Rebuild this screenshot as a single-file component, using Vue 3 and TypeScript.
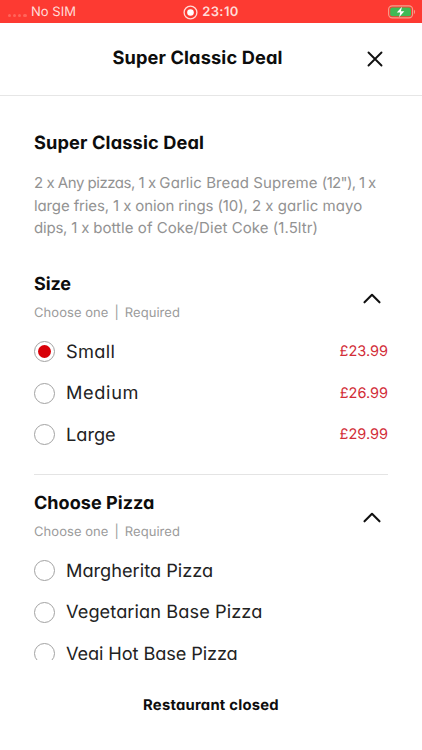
<script setup lang="ts">
import { ref } from 'vue'

interface Run {
  text: string
  tracking: number
}

interface Option {
  name: string
  tracking: number
  price?: string
}

interface Group {
  title: string
  tracking: number
  options: Option[]
}

const description: Run[][] = [
  [
    { text: '2 x Any pizzas, 1 x ', tracking: -0.48 },
    { text: 'Garlic Bread Supreme ', tracking: 0.08 },
    { text: '(12"), 1 x', tracking: -0.65 },
  ],
  [
    { text: 'large fries, 1 x ', tracking: -0.12 },
    { text: 'onion rings (10), ', tracking: -0.1 },
    { text: '2 x garlic mayo', tracking: 0.05 },
  ],
  [
    { text: 'dips, 1 x ', tracking: -0.2 },
    { text: 'bottle of Coke/Diet Coke (1.5ltr)', tracking: 0.06 },
  ],
]

const groups: Group[] = [
  {
    title: 'Size',
    tracking: -0.1,
    options: [
      { name: 'Small', tracking: 0.35, price: '£23.99' },
      { name: 'Medium', tracking: 0.65, price: '£26.99' },
      { name: 'Large', tracking: 0, price: '£29.99' },
    ],
  },
  {
    title: 'Choose Pizza',
    tracking: 0.05,
    options: [
      { name: 'Margherita Pizza', tracking: 0 },
      { name: 'Vegetarian Base Pizza', tracking: 0.08 },
      { name: 'Vegi Hot Base Pizza', tracking: -0.11 },
    ],
  },
]

const selected = ref<Record<string, string>>({ Size: 'Small' })
</script>

<template>
  <div class="screen">
    <div class="status">
      <div class="carrier">
        <span class="dots"><i v-for="n in 4" :key="n"></i></span>
        <span>No SIM</span>
      </div>
      <div class="clock">
        <svg width="15" height="15" viewBox="0 0 15 15">
          <circle cx="7.5" cy="7.5" r="6.4" fill="none" stroke="#ffdcd8" stroke-width="1.3" />
          <circle cx="7.5" cy="7.5" r="3.3" fill="#fff" />
        </svg>
        <span>23:10</span>
      </div>
      <svg class="battery" width="28" height="14" viewBox="0 0 28 14">
        <rect x="0.6" y="0.9" width="24" height="12" rx="3.6" fill="none" stroke="#f5a08c" stroke-width="1.1" />
        <rect x="2.2" y="2.5" width="20.8" height="8.8" rx="2" fill="#3fba55" />
        <path d="M26 4.8c1.4.6 1.4 3.6 0 4.2z" fill="#f5a08c" />
        <path d="M14 1.8 8.8 7.5h3.4l-1.1 4.7 5.2-6h-3.4z" fill="#fff" />
      </svg>
    </div>

    <header class="header">
      <h1>Super Classic Deal</h1>
      <svg class="close" width="16" height="16" viewBox="0 0 16 16">
        <path d="M1.5 1.5 14.5 14.5M14.5 1.5 1.5 14.5" fill="none" stroke="#111" stroke-width="1.9" stroke-linecap="round" />
      </svg>
    </header>

    <main class="content">
      <h2 class="deal">Super Classic Deal</h2>
      <p class="description">
        <span v-for="(line, i) in description" :key="i" class="line"><span
          v-for="run in line"
          :key="run.text"
          :style="{ letterSpacing: run.tracking + 'px' }"
        >{{ run.text }}</span></span>
      </p>

      <section v-for="group in groups" :key="group.title" class="group">
        <div class="group-head">
          <div>
            <h3 :style="{ letterSpacing: group.tracking + 'px' }">{{ group.title }}</h3>
            <p class="hint"><span>Choose one</span><span>|</span><span>Required</span></p>
          </div>
          <svg class="chevron" width="18" height="11" viewBox="0 0 18 11">
            <path d="M1.5 9.3 9 1.8l7.5 7.5" fill="none" stroke="#111" stroke-width="2.1" stroke-linecap="round" stroke-linejoin="round" />
          </svg>
        </div>
        <div
          v-for="option in group.options"
          :key="option.name"
          class="option"
          @click="selected[group.title] = option.name"
        >
          <span class="radio" :class="{ checked: selected[group.title] === option.name }"></span>
          <span class="name" :style="{ letterSpacing: option.tracking + 'px' }">{{ option.name }}</span>
          <span v-if="option.price" class="price">{{ option.price }}</span>
        </div>
      </section>
    </main>

    <footer class="footer">Restaurant closed</footer>
  </div>
</template>

<style>
body {
  margin: 0;
  background: #fff;
}
</style>

<style scoped>
.screen {
  display: flex;
  flex-direction: column;
  height: 750px;
  overflow: hidden;
  background: #fff;
  color: #0d0d0d;
  font-family: Inter, "Liberation Sans", sans-serif;
  font-feature-settings: "cv11" 1;
  text-rendering: geometricPrecision;
}
h1, h2, h3, p {
  margin: 0;
}
.status {
  flex: none;
  box-sizing: border-box;
  height: 23px;
  padding: 1px 6px 0 8px;
  display: grid;
  grid-template-columns: 1fr auto 1fr;
  align-items: center;
  background: #fd3a32;
  color: #ffdcd8;
  font-size: 13px;
  font-feature-settings: normal;
}
.carrier {
  display: flex;
  align-items: center;
  gap: 4.5px;
}
.dots {
  display: flex;
  gap: 1.8px;
  padding-top: 7px;
}
.dots i {
  width: 3.3px;
  height: 3.3px;
  border-radius: 50%;
  background: #ff655b;
}
.clock {
  display: flex;
  align-items: center;
  gap: 4px;
  margin-right: 2px;
  font-weight: 600;
  letter-spacing: 0.4px;
}
.battery {
  justify-self: end;
}
.header {
  flex: none;
  box-sizing: border-box;
  height: 73px;
  padding: 0 39px 2px 28px;
  display: grid;
  grid-template-columns: 1fr 16px;
  align-items: center;
  border-bottom: 1px solid #e6e6e6;
}
.header h1 {
  text-align: center;
  font-size: 18.2px;
  font-weight: 700;
  letter-spacing: 0.13px;
}
.close {
  margin-top: 2px;
}
.content {
  flex: none;
  box-sizing: border-box;
  height: 564px;
  padding: 35px 34px 0;
  overflow: hidden;
}
.deal {
  font-size: 18.2px;
  line-height: 24px;
  font-weight: 700;
  letter-spacing: 0.13px;
}
.description {
  margin-top: 17px;
  color: #929292;
  font-size: 15px;
  line-height: 22.5px;
}
.line {
  display: block;
  white-space: pre;
}
.group {
  padding-top: 17.5px;
}
.group:first-of-type {
  padding-top: 33.5px;
  padding-bottom: 18px;
}
.group + .group {
  border-top: 1px solid #e4e4e4;
}
.group-head {
  display: flex;
  justify-content: space-between;
  align-items: flex-start;
  height: 57.8px;
}
.group-head h3 {
  font-size: 18px;
  line-height: 24px;
  font-weight: 700;
}
.hint {
  display: flex;
  gap: 6px;
  margin-top: 5.5px;
  color: #9b9b9b;
  font-size: 13px;
  line-height: 20px;
  letter-spacing: 0.05px;
}
.chevron {
  margin: 20px 7px 0 0;
}
.option {
  display: flex;
  align-items: center;
  height: 41.6px;
}
.radio {
  flex: none;
  box-sizing: border-box;
  width: 21px;
  height: 21px;
  border: 1.5px solid #a2a2a2;
  border-radius: 50%;
  display: grid;
  place-items: center;
}
.radio.checked::after {
  content: "";
  width: 13px;
  height: 13px;
  border-radius: 50%;
  background: #d80008;
}
.name {
  flex: 1;
  margin-left: 11px;
  color: #222;
  font-size: 18.2px;
  white-space: nowrap;
}
.price {
  color: #d22d37;
  font-size: 14.5px;
}
.footer {
  flex: 1;
  padding-top: 35px;
  text-align: center;
  font-size: 14.8px;
  line-height: 20px;
  font-weight: 700;
  letter-spacing: 0.24px;
}
</style>
